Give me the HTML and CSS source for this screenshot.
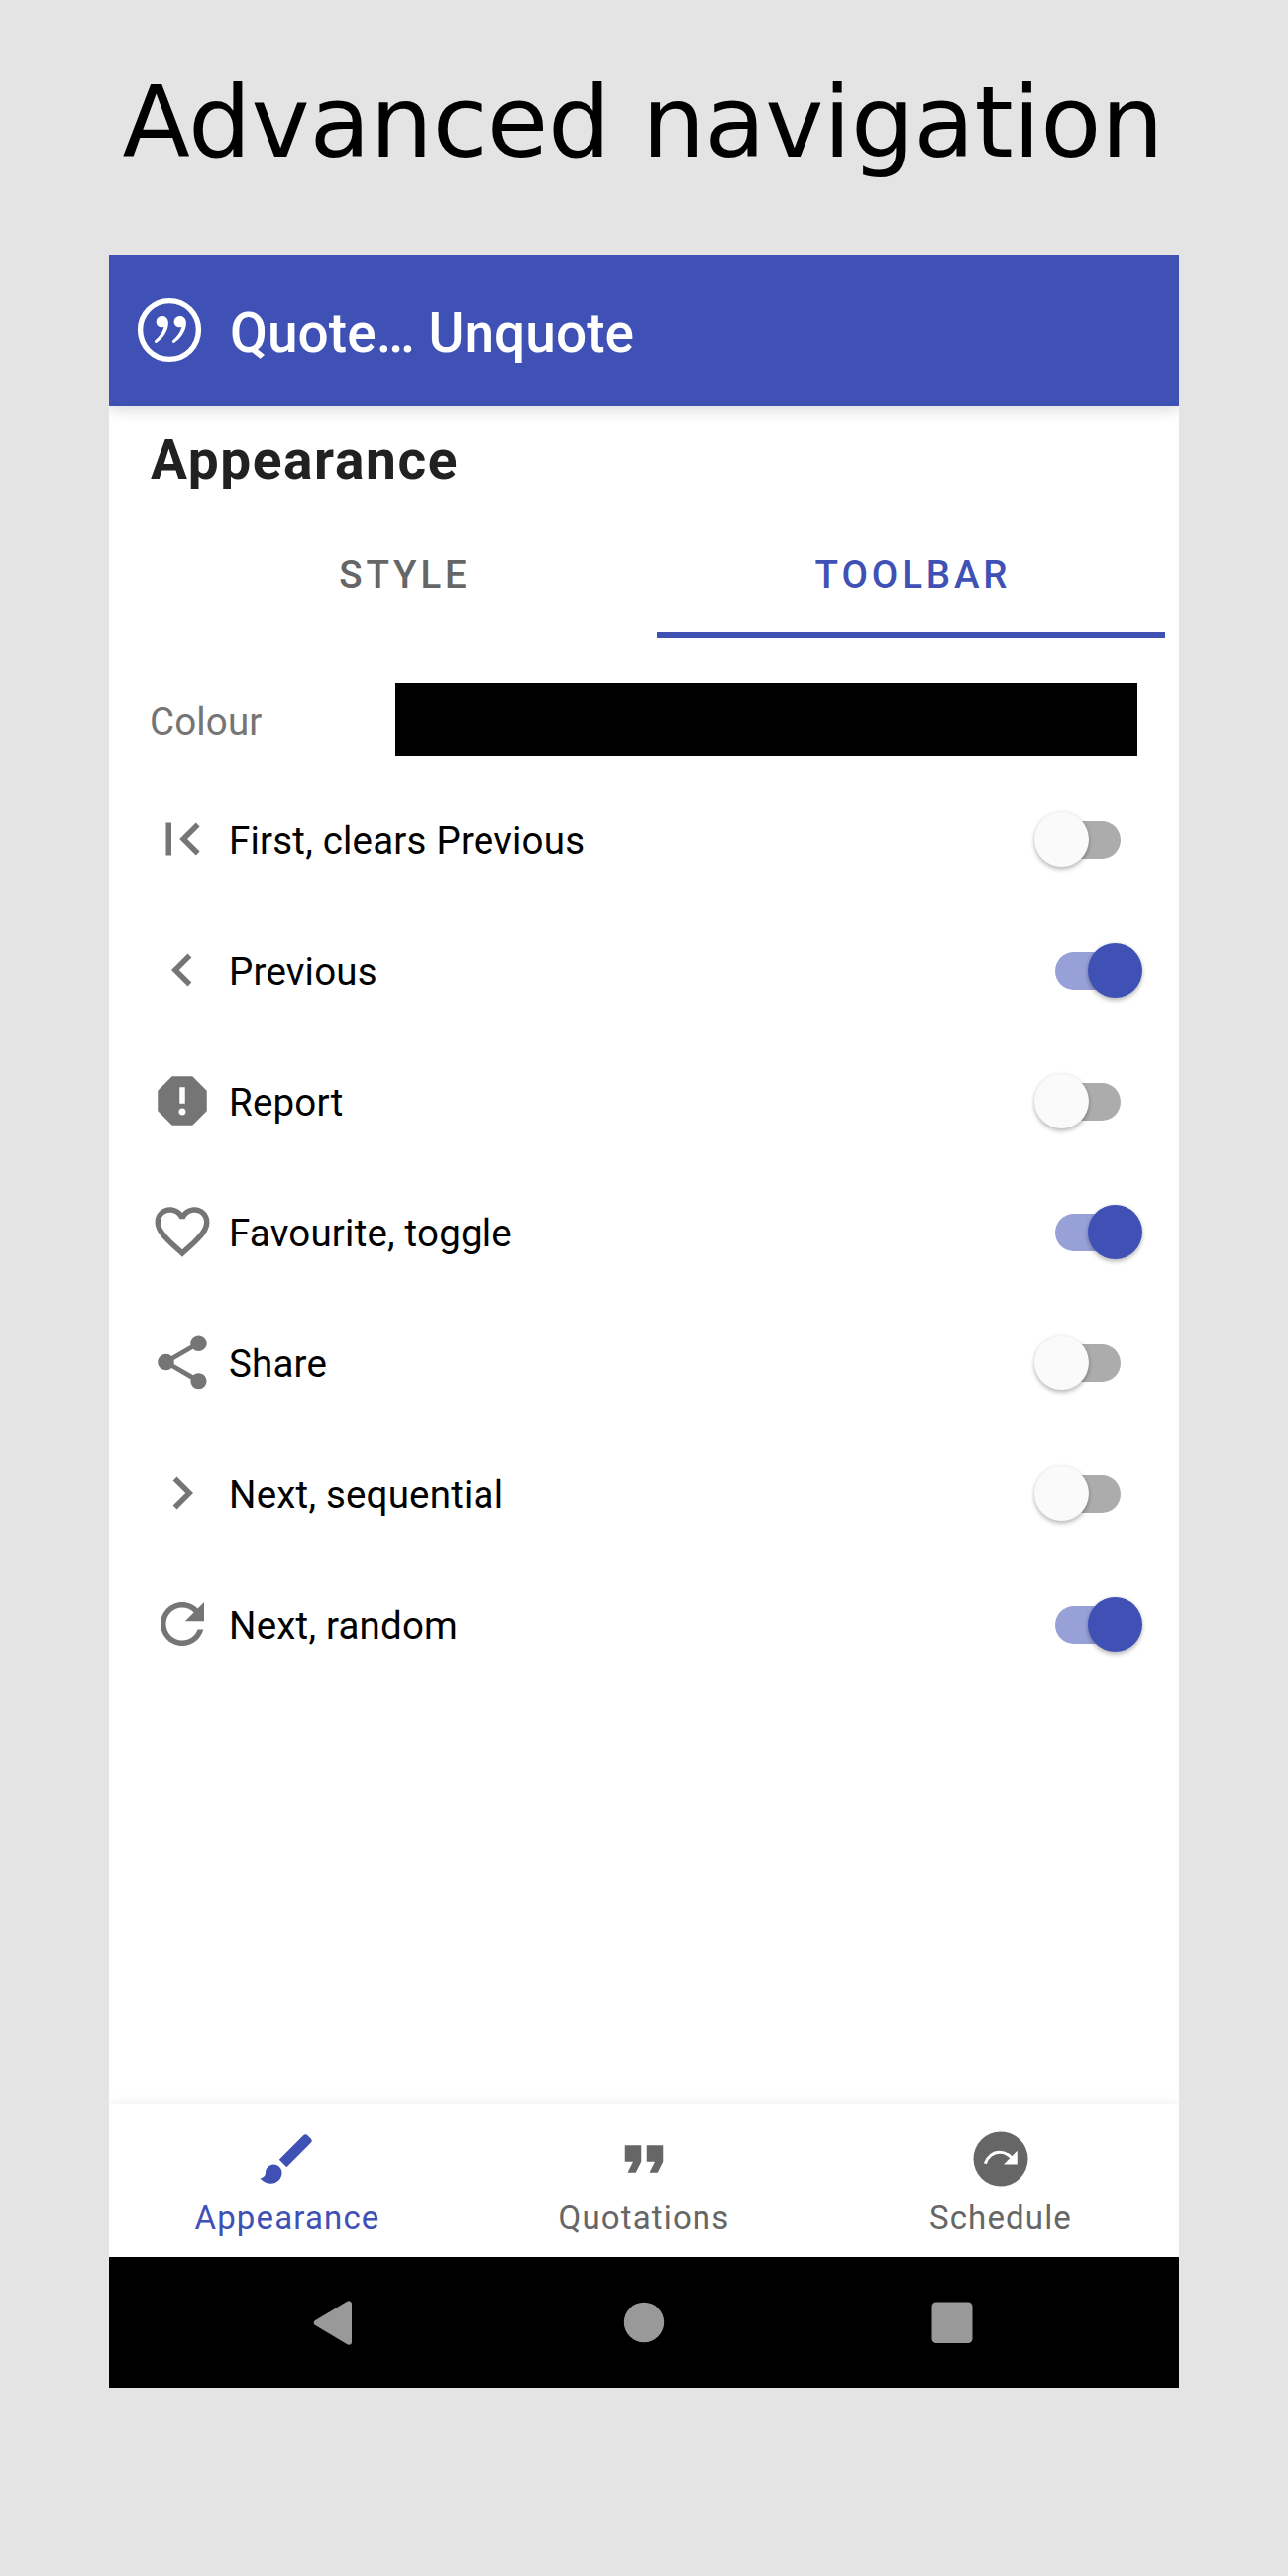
FILE: index.html
```html
<!DOCTYPE html>
<html lang="en-GB">
<head>
<meta charset="utf-8">
<title>Quote… Unquote</title>
<link rel="stylesheet" href="styles.css">
</head>
<body>
<h1 class="headline">Advanced navigation</h1>
<main class="screen">
  <header class="app-bar">
    <svg class="app-logo" viewBox="0 0 66 66"><circle cx="33" cy="33" r="29.4" fill="none" stroke="#fff" stroke-width="5.4"/><g fill="#fff"><circle cx="25.200" cy="24.700" r="5.600"/><path d="M25.500 19.100c4 0 6.400 3 6.400 7 0 8-6 16-11.800 19.600-1.400.9-3-.9-1.800-2.200 4.300-3.800 8.500-8.500 9.300-15z"/><circle cx="43.200" cy="24.700" r="5.600"/><path d="M43.500 19.100c4 0 6.400 3 6.400 7 0 8-6 16-11.800 19.600-1.400.9-3-.9-1.800-2.200 4.300-3.800 8.500-8.500 9.300-15z"/></g></svg>
    <span class="app-title">Quote… Unquote</span>
  </header>
  <section class="content">
    <h2 class="section-title">Appearance</h2>
    <nav class="tabs">
      <span class="tab">STYLE</span>
      <span class="tab tab-active">TOOLBAR</span>
    </nav>
    <div class="colour-row"><span class="colour-label">Colour</span><span class="swatch"></span></div>
    <ul class="options">
      <li class="option"><svg class="icon" viewBox="0 0 24 24"><path d="M18.410 16.590L13.820 12l4.590-4.590L17 6l-6 6 6 6zM6 6h2v12H6z"/></svg><span class="option-label">First, clears Previous</span><span class="switch"></span></li>
      <li class="option"><svg class="icon" viewBox="0 0 24 24"><path d="M15.410 7.410L14 6l-6 6 6 6 1.410-1.410L10.830 12z"/></svg><span class="option-label">Previous</span><span class="switch on"></span></li>
      <li class="option"><svg class="icon" viewBox="0 0 24 24"><path d="M15.730 3H8.270L3 8.270v7.460L8.270 21h7.460L21 15.730V8.270L15.730 3zM12 17.300c-.72 0-1.300-.58-1.300-1.300s.58-1.300 1.300-1.300 1.300.58 1.300 1.300-.58 1.300-1.300 1.300zm1-4.300h-2V7h2v6z"/></svg><span class="option-label">Report</span><span class="switch"></span></li>
      <li class="option"><svg class="icon" viewBox="0 0 24 24"><path d="M16.500 3c-1.740 0-3.410.81-4.500 2.090C10.910 3.810 9.240 3 7.500 3 4.420 3 2 5.420 2 8.500c0 3.780 3.400 6.860 8.550 11.540L12 21.350l1.450-1.320C18.600 15.360 22 12.280 22 8.500 22 5.420 19.580 3 16.500 3zm-4.400 15.550l-.1.1-.1-.1C7.140 14.240 4 11.390 4 8.500 4 6.500 5.500 5 7.500 5c1.540 0 3.040.99 3.570 2.360h1.870C13.460 5.990 14.960 5 16.500 5c2 0 3.500 1.500 3.500 3.500 0 2.890-3.140 5.740-7.900 10.050z"/></svg><span class="option-label">Favourite, toggle</span><span class="switch on"></span></li>
      <li class="option"><svg class="icon" viewBox="0 0 24 24"><path d="M18 16.080c-.76 0-1.440.3-1.960.77L8.910 12.700c.05-.23.09-.46.09-.7s-.04-.47-.09-.7l7.050-4.110c.54.5 1.250.81 2.040.81 1.660 0 3-1.340 3-3s-1.340-3-3-3-3 1.340-3 3c0 .24.04.47.09.7L8.040 9.810C7.500 9.310 6.790 9 6 9c-1.660 0-3 1.340-3 3s1.340 3 3 3c.79 0 1.500-.31 2.040-.81l7.120 4.160c-.05.21-.08.43-.08.65 0 1.610 1.310 2.920 2.920 2.920s2.920-1.310 2.920-2.920-1.310-2.920-2.920-2.920z"/></svg><span class="option-label">Share</span><span class="switch"></span></li>
      <li class="option"><svg class="icon" viewBox="0 0 24 24"><path d="M10 6L8.590 7.410 13.170 12l-4.580 4.590L10 18l6-6z"/></svg><span class="option-label">Next, sequential</span><span class="switch"></span></li>
      <li class="option"><svg class="icon" viewBox="0 0 24 24"><path d="M17.650 6.350C16.200 4.900 14.210 4 12 4c-4.420 0-7.990 3.580-7.990 8s3.570 8 7.990 8c3.730 0 6.840-2.550 7.730-6h-2.080c-.82 2.330-3.040 4-5.650 4-3.310 0-6-2.690-6-6s2.690-6 6-6c1.660 0 3.140.69 4.220 1.780L13 11h7V4l-2.350 2.350z"/></svg><span class="option-label">Next, random</span><span class="switch on"></span></li>
    </ul>
  </section>
  <nav class="bottom-nav">
    <span class="destination selected"><svg class="icon" viewBox="0 0 24 24"><path d="M7 14c-1.660 0-3 1.340-3 3 0 1.310-1.160 2-2 2 .92 1.220 2.490 2 4 2 2.210 0 4-1.790 4-4 0-1.660-1.340-3-3-3zm13.710-9.370l-1.340-1.340c-.39-.39-1.020-.39-1.410 0L9 12.250 11.750 15l8.960-8.960c.39-.39.39-1.020 0-1.410z"/></svg><span class="destination-label">Appearance</span></span>
    <span class="destination"><svg class="icon" viewBox="0 0 24 24"><path d="M6 17h3l2-4V7H5v6h3zm8 0h3l2-4V7h-6v6h3z"/></svg><span class="destination-label">Quotations</span></span>
    <span class="destination"><svg class="icon" viewBox="0 0 24 24"><circle cx="12" cy="12" r="10"/><path d="M6.300 13.700C7.100 11.200 9.200 9.550 11.600 9.550c1.700 0 3.200.8 4.300 2" fill="none" stroke="#fff" stroke-width="1.100"/><path d="M18.100 9v5H13.100z" fill="#fff"/></svg><span class="destination-label">Schedule</span></span>
  </nav>
  <footer class="system-nav">
    <svg class="system-icon" viewBox="0 0 66 66"><path d="M13.800 33.500L46 14.300V52.700z" stroke="#999" stroke-width="6" stroke-linejoin="round"/></svg>
    <svg class="system-icon" viewBox="0 0 66 66"><circle cx="33" cy="33" r="20.200"/></svg>
    <svg class="system-icon" viewBox="0 0 66 66"><rect x="12.500" y="12.500" width="41" height="41.500" rx="4.500"/></svg>
  </footer>
</main>
</body>
</html>
```
FILE: styles.css
```css
* { box-sizing: border-box; }

body {
  margin: 0;
  height: 2600px;
  background: #e4e4e4;
  font-family: Roboto, sans-serif;
}

.headline {
  margin: 0;
  height: 257px;
  padding: 64px 2px 0 0;
  font: 400 100px/120px "DejaVu Sans", sans-serif;
  letter-spacing: -0.15px;
  text-align: center;
  white-space: nowrap;
  color: #000;
}

.screen {
  display: flex;
  flex-direction: column;
  width: 1080px;
  height: 2153px;
  margin: 0 auto;
  background: #fff;
  overflow: hidden;
}

.app-bar {
  display: flex;
  align-items: center;
  gap: 28px;
  height: 153px;
  padding-left: 28px;
  background: #3f51b5;
  box-shadow: 0 2px 16px rgba(0, 0, 0, 0.18);
  color: #fff;
}

.app-logo { width: 66px; height: 66px; margin-bottom: 2px; }

.app-title { font-size: 55px; line-height: 64px; font-weight: 500; letter-spacing: 0.05px; padding-top: 5px; }

.content { flex: 1; }

.section-title {
  margin: 22px 0 0 42px;
  font-size: 55px;
  line-height: 64px;
  font-weight: 700;
  letter-spacing: 1.6px;
  color: #212121;
}

.tabs {
  display: flex;
  height: 132px;
  margin: 16px 14px 0 40px;
}

.tab {
  flex: 1;
  display: flex;
  align-items: center;
  justify-content: center;
  padding: 8px 0 0 4px;
  font-size: 38.5px;
  font-weight: 500;
  letter-spacing: 3.85px;
  color: #666;
  border-bottom: 6px solid transparent;
}

.tab-active { color: #3f51b5; border-color: #3f51b5; }

.colour-row {
  display: flex;
  align-items: center;
  height: 74px;
  margin: 45px 42px 0 41px;
}

.colour-label { width: 248px; padding-top: 5px; font-size: 38.5px; letter-spacing: 0.15px; color: #757575; }

.swatch { flex: 1; height: 74px; background: #000; }

.options { list-style: none; margin: 18px 0 0; padding: 0 59px 0 41px; }

.option { display: flex; align-items: center; height: 132px; }

.icon { width: 66px; height: 66px; fill: #757575; }

.option-label { flex: 1; padding: 3px 0 0 14px; font-size: 38.5px; letter-spacing: 0.2px; color: #000; }

.switch {
  position: relative;
  width: 66px;
  height: 38px;
  margin-top: 1px;
  border-radius: 19px;
  background: #acacac;
}

.switch::before {
  content: "";
  position: absolute;
  left: -21.5px;
  top: -9px;
  width: 55px;
  height: 55px;
  border-radius: 50%;
  background: #fafafa;
  box-shadow: 0 3px 4px rgba(0, 0, 0, 0.22), 0 0 4px rgba(0, 0, 0, 0.1);
}

.switch.on { background: #97a0d7; }
.switch.on::before { left: 32.5px; background: #3f51b5; }

.bottom-nav {
  display: flex;
  height: 154px;
  background: #fff;
  box-shadow: 0 0 12px rgba(0, 0, 0, 0.08);
}

.destination {
  flex: 1;
  display: flex;
  flex-direction: column;
  align-items: center;
  padding-top: 22px;
  color: #666;
}

.destination .icon { fill: currentColor; }
.destination-label { margin-top: 7px; font-size: 33px; line-height: 39px; letter-spacing: 1.15px; }
.destination.selected { color: #3f51b5; }

.system-nav {
  display: flex;
  align-items: center;
  justify-content: center;
  gap: 245px;
  height: 132px;
  background: #000;
}

.system-icon { width: 66px; height: 66px; fill: #999; }
```
